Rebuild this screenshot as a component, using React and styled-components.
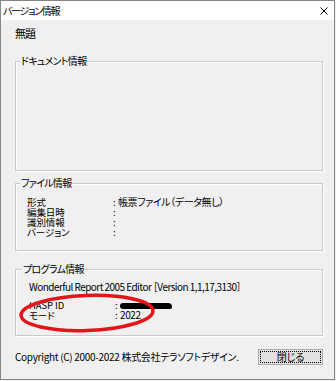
import styled, { createGlobalStyle } from "styled-components";

const GlobalStyle = createGlobalStyle`
  body {
    margin: 0;
    background: #f0f0f0;
    font-family: "Noto Sans CJK JP", sans-serif;
  }
`;

const fileRows = [
  ["形式", "帳票ファイル（データ無し）"],
  ["編集日時", ""],
  ["識別情報", ""],
  ["バージョン", ""],
];

export default function App() {
  return (
    <>
      <GlobalStyle />
      <Window>
        <TitleBar>
          <Title>バージョン情報</Title>
          <svg width="8" height="8" viewBox="0 0 8 8">
            <path d="M0.5 0.5 L7.5 7.5 M7.5 0.5 L0.5 7.5" stroke="#000" strokeWidth="1" />
          </svg>
        </TitleBar>
        <Body>
          <DocName>無題</DocName>

          <Group $gap={21} $h={110}>
            <Legend>ドキュメント情報</Legend>
          </Group>

          <Group $gap={12} $h={68}>
            <Legend>ファイル情報</Legend>
            <Rows $top={8}>
              {fileRows.map(([k, v]) => (
                <Row key={k}>
                  <span>{k}</span>
                  <span>:</span>
                  <Value>{v}</Value>
                </Row>
              ))}
            </Rows>
          </Group>

          <Group $gap={18} $h={67} $pad={13}>
            <Legend>プログラム情報</Legend>
            <ProductLine>Wonderful Report 2005 Editor ［Version 1,1,17,3130］</ProductLine>
            <Rows $top={7}>
              <Row>
                <span>HASP ID</span>
                <span>:</span>
                <Value>
                  <Redacted />
                </Value>
              </Row>
              <Row>
                <span>モード</span>
                <span>:</span>
                <Value>2022</Value>
              </Row>
            </Rows>
            <Circle width="140" height="42" viewBox="0 0 140 42">
              <ellipse
                cx="70"
                cy="21"
                rx="66"
                ry="17.5"
                fill="none"
                stroke="#e4141b"
                strokeWidth="3.5"
                transform="rotate(-2 70 21)"
              />
            </Circle>
          </Group>

          <Footer>
            <Copyright>Copyright (C) 2000-2022 株式会社テラソフトデザイン.</Copyright>
            <CloseButton>
              <Focus>閉じる</Focus>
            </CloseButton>
          </Footer>
        </Body>
      </Window>
    </>
  );
}

const Window = styled.div`
  width: 335px;
  height: 380px;
  box-sizing: border-box;
  border: 1px solid #858585;
  background: #f0f0f0;
  display: flex;
  flex-direction: column;
  color: #000;
  font-size: 10px;
  letter-spacing: -0.4px;
  font-feature-settings: "palt";
`;

const TitleBar = styled.div`
  height: 19px;
  background: #ffffff;
  display: flex;
  align-items: center;
  justify-content: space-between;
  padding: 0 6px 0 2px;
`;

const Title = styled.span`
  font-size: 10px;
  line-height: 12px;
  letter-spacing: -1.3px;
`;

const Body = styled.div`
  padding: 6px 11px 0 14px;
`;

const DocName = styled.div`
  font-size: 11px;
  line-height: 14px;
  letter-spacing: -1px;
`;

const Group = styled.div`
  position: relative;
  margin-top: ${(p) => p.$gap}px;
  height: ${(p) => p.$h}px;
  box-sizing: border-box;
  border: 1px solid #c9c9c9;
  box-shadow: inset 1px 1px 0 #ffffff, 1px 1px 0 #ffffff;
  padding: 0 8px 0 ${(p) => p.$pad || 11}px;
`;

const Legend = styled.div`
  width: fit-content;
  margin: -7px 0 0 ${(p) => -((p.$pad || 11) - 4)}px;
  padding: 0 1px;
  background: #f0f0f0;
  line-height: 12px;
  font-size: 10px;
  letter-spacing: -0.7px;
`;

const Rows = styled.div`
  margin-top: ${(p) => p.$top}px;
`;

const Row = styled.div`
  display: grid;
  grid-template-columns: 86px 5px 1fr;
  line-height: 10px;
  height: 10px;
  font-size: 9.5px;
  letter-spacing: -0.1px;
`;

const Value = styled.span`
  font-size: 10px;
  letter-spacing: -0.4px;
`;

const ProductLine = styled.div`
  margin-top: 6px;
  line-height: 12px;
  font-size: 10px;
  letter-spacing: -0.55px;
`;

const Redacted = styled.span`
  display: inline-block;
  width: 52px;
  height: 6px;
  margin-top: 3px;
  background: #000;
  border-radius: 3px 4px 2px 3px;
  vertical-align: top;
`;

const Circle = styled.svg`
  position: absolute;
  left: 1px;
  top: 22px;
  overflow: visible;
  pointer-events: none;
`;

const Footer = styled.div`
  display: flex;
  align-items: center;
  justify-content: space-between;
  margin-top: 13px;
`;

const Copyright = styled.span`
  font-size: 10px;
  line-height: 12px;
  letter-spacing: -0.3px;
`;

const CloseButton = styled.button`
  width: 65px;
  height: 16px;
  padding: 1px;
  box-sizing: border-box;
  border: 1px solid #adadad;
  background: #e1e1e1;
  font-family: inherit;
  font-size: 10px;
  font-feature-settings: "palt";
  display: flex;
  align-items: stretch;
  justify-content: stretch;
`;

const Focus = styled.span`
  flex: 1;
  border: 1px dotted #000;
  display: flex;
  align-items: center;
  justify-content: center;
  line-height: 10px;
`;
